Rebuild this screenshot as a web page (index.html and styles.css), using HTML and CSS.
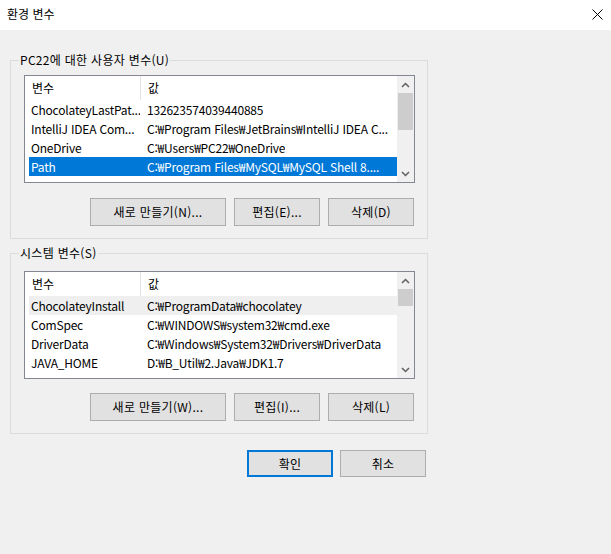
FILE: index.html
```html
<!DOCTYPE html>
<html lang="ko">
<head>
<meta charset="utf-8">
<title>환경 변수</title>
<link rel="stylesheet" href="styles.css">
</head>
<body>
<div class="window">
  <div class="titlebar">
    <span class="title">환경 변수</span>
    <svg class="close" width="11" height="11" viewBox="0 0 11 11"><path d="M0.5 0.5 L10.5 10.5 M10.5 0.5 L0.5 10.5" stroke="#000" stroke-width="1" fill="none"/></svg>
  </div>
  <div class="content">
    <section class="group group--user">
      <span class="group-label">PC22에 대한 사용자 변수(U)</span>
      <div class="listbox">
        <div class="list-main">
          <div class="list-header">
            <div class="hcell hcell--name">변수</div>
            <div class="hcell hcell--value">값</div>
          </div>
          <div class="rows">
            <div class="row"><span class="cell cell--name">ChocolateyLastPat...</span><span class="cell cell--value">132623574039440885</span></div>
            <div class="row"><span class="cell cell--name">IntelliJ IDEA Com...</span><span class="cell cell--value">C:₩Program Files₩JetBrains₩IntelliJ IDEA C...</span></div>
            <div class="row"><span class="cell cell--name">OneDrive</span><span class="cell cell--value">C:₩Users₩PC22₩OneDrive</span></div>
            <div class="row row--selected"><span class="cell cell--name">Path</span><span class="cell cell--value">C:₩Program Files₩MySQL₩MySQL Shell 8....</span></div>
          </div>
        </div>
        <div class="scrollbar">
          <div class="arrow"><svg width="9" height="6" viewBox="0 0 9 6"><path d="M1 5 L4.5 1.5 L8 5" stroke="#606060" stroke-width="1.5" fill="none"/></svg></div>
          <div class="track"><div class="thumb" style="height:37px"></div></div>
          <div class="arrow"><svg width="9" height="6" viewBox="0 0 9 6"><path d="M1 1 L4.5 4.5 L8 1" stroke="#606060" stroke-width="1.5" fill="none"/></svg></div>
        </div>
      </div>
      <div class="buttons">
        <button class="btn btn--wide">새로 만들기(N)...</button>
        <button class="btn">편집(E)...</button>
        <button class="btn">삭제(D)</button>
      </div>
    </section>

    <section class="group group--system">
      <span class="group-label">시스템 변수(S)</span>
      <div class="listbox">
        <div class="list-main">
          <div class="list-header">
            <div class="hcell hcell--name">변수</div>
            <div class="hcell hcell--value">값</div>
          </div>
          <div class="rows">
            <div class="row row--hover"><span class="cell cell--name">ChocolateyInstall</span><span class="cell cell--value">C:₩ProgramData₩chocolatey</span></div>
            <div class="row"><span class="cell cell--name">ComSpec</span><span class="cell cell--value">C:₩WINDOWS₩system32₩cmd.exe</span></div>
            <div class="row"><span class="cell cell--name">DriverData</span><span class="cell cell--value">C:₩Windows₩System32₩Drivers₩DriverData</span></div>
            <div class="row"><span class="cell cell--name">JAVA_HOME</span><span class="cell cell--value">D:₩B_Util₩2.Java₩JDK1.7</span></div>
          </div>
        </div>
        <div class="scrollbar">
          <div class="arrow"><svg width="9" height="6" viewBox="0 0 9 6"><path d="M1 5 L4.5 1.5 L8 5" stroke="#606060" stroke-width="1.5" fill="none"/></svg></div>
          <div class="track"><div class="thumb" style="height:17px"></div></div>
          <div class="arrow"><svg width="9" height="6" viewBox="0 0 9 6"><path d="M1 1 L4.5 4.5 L8 1" stroke="#606060" stroke-width="1.5" fill="none"/></svg></div>
        </div>
      </div>
      <div class="buttons">
        <button class="btn btn--wide">새로 만들기(W)...</button>
        <button class="btn">편집(I)...</button>
        <button class="btn">삭제(L)</button>
      </div>
    </section>

    <div class="dialog-buttons">
      <button class="btn btn--default">확인</button>
      <button class="btn btn--cancel">취소</button>
    </div>
  </div>
</div>
</body>
</html>
```

FILE: styles.css
```css
* { box-sizing: border-box; }

html, body {
  margin: 0;
  padding: 0;
}

body {
  width: 611px;
  height: 554px;
  background: #f0f0f0;
  font-family: "Noto Sans CJK KR", "Noto Sans", sans-serif;
  font-size: 12px;
  color: #000;
  overflow: hidden;
}

.window {
  width: 611px;
  height: 554px;
}

.titlebar {
  height: 30px;
  background: #fff;
  display: flex;
  align-items: center;
  justify-content: space-between;
  padding: 0 8px 2px 7px;
}

.title {
  font-size: 12px;
  line-height: 16px;
}

.close {
  display: block;
}

.content {
  padding: 30px 0 0 10px;
  width: 428px;
}

.group {
  position: relative;
  width: 418px;
  border: 1px solid #dcdcdc;
  padding: 14px 12px 12px 13px;
}

.group--system {
  margin-top: 14px;
  padding-top: 17px;
}

.group-label {
  position: absolute;
  top: -9px;
  left: 8px;
  padding: 0 1px;
  line-height: 16px;
  letter-spacing: 0.3px;
  background: #f0f0f0;
  white-space: nowrap;
}

.listbox {
  width: 391px;
  height: 108px;
  border: 1px solid #828790;
  background: #fff;
  display: flex;
}

.list-main {
  flex: 1;
  overflow: hidden;
  min-width: 0;
}

.list-header {
  height: 24px;
  display: flex;
  align-items: stretch;
}

.hcell {
  line-height: 24px;
  padding-left: 7px;
  white-space: nowrap;
}

.hcell--name {
  width: 116px;
  border-right: 1px solid #e5e5e5;
}

.rows {
  margin-left: 4px;
}

.row {
  height: 19px;
  line-height: 19px;
  display: flex;
  white-space: nowrap;
  overflow: hidden;
  letter-spacing: -0.2px;
}

.row--selected {
  background: #0078d7;
  color: #fff;
}

.row--hover {
  background: #efefef;
}

.cell--name {
  width: 111px;
  padding-left: 2px;
  overflow: hidden;
  flex: none;
}

.cell--value {
  padding-left: 7px;
  overflow: hidden;
}

.scrollbar {
  width: 17px;
  flex: none;
  background: #f0f0f0;
  display: flex;
  flex-direction: column;
}

.arrow {
  height: 17px;
  display: flex;
  align-items: center;
  justify-content: center;
}

.arrow svg { display: block; }

.track {
  flex: 1;
}

.thumb {
  margin: 0 1px;
  background: #cdcdcd;
}

.buttons {
  display: flex;
  justify-content: flex-end;
  gap: 8px;
  margin-top: 15px;
  padding-right: 1px;
}

.group--system .buttons {
  margin-top: 14px;
}

.btn {
  height: 28px;
  width: 86px;
  border: 1px solid #adadad;
  background: #e1e1e1;
  font-family: inherit;
  font-size: 12px;
  letter-spacing: 0.3px;
  color: #000;
  padding: 0;
  margin: 0;
  line-height: 16px;
}

.btn--wide {
  width: 136px;
}

.dialog-buttons {
  display: flex;
  justify-content: flex-end;
  gap: 7px;
  margin-top: 16px;
  padding-right: 2px;
  width: 418px;
}

.btn--default,
.btn--cancel {
  height: 27px;
}

.btn--default {
  border: 2px solid #0078d7;
}
```
